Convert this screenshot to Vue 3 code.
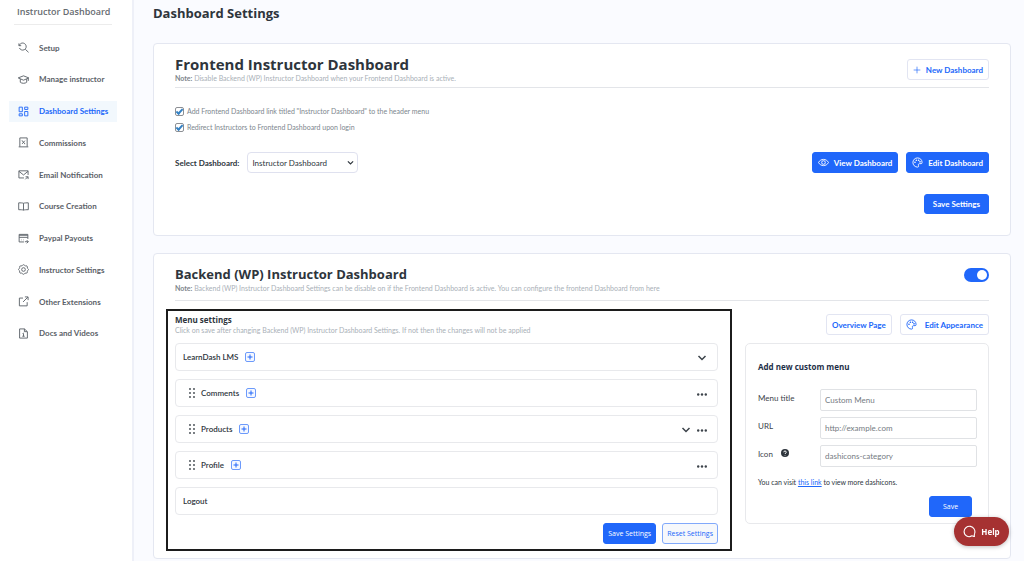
<script setup>
import { ref } from 'vue'

const navItems = [
  { label: 'Setup', icon: 'setup' },
  { label: 'Manage instructor', icon: 'cap' },
  { label: 'Dashboard Settings', icon: 'grid', active: true },
  { label: 'Commissions', icon: 'receipt' },
  { label: 'Email Notification', icon: 'mail' },
  { label: 'Course Creation', icon: 'book' },
  { label: 'Paypal Payouts', icon: 'card' },
  { label: 'Instructor Settings', icon: 'gear' },
  { label: 'Other Extensions', icon: 'external' },
  { label: 'Docs and Videos', icon: 'doc' },
]

const icons = {
  setup: 'M2 3v5h5M2.500 8C5 1.500 12 .5 16 5c3.500 4 2 10-2.500 12C9 19 4.500 16.500 3 13M16 16l7 6.500',
  cap: 'M.5 8.500L12 4l11.500 4.500L12 13.500zM5 11v7c3.500 3 10.500 3 14 0v-7M22.500 9v6',
  grid: 'M2.500 2.500h7v10h-7zM14.500 2.500h7v5h-7zM14.500 12h7v9.500h-7zM2.500 17h7v4.500h-7z',
  receipt: 'M4 21V2h16v19M1.500 21.500h21M9 8l6 7M15 8l-6 7M8.500 8h1M14.500 15h1',
  mail: 'M13 19.500H2V4h20v9M2 5l10 8L22 5M16 22.500l5.500-5.500M16.500 17H22v5',
  book: 'M12 5v15M12 5C10 4 5 4 1.500 4v15c4 0 8.500 0 10.500 1 2-1 6.500-1 10.500-1V4c-3.500 0-8.500 0-10.500 1z',
  card: 'M13 19.500H2.500V3h19v10M2.500 5h19M2.500 9.500h19M7 15h1M11 15h1M15 19h7.500M19 15.500l3.500 3.500-3.500 3.500',
  gear: 'M12 1.500c2 0 2 2 3.500 2.500s3-.8 4.300.6 0 3 .7 4.400S23 10.500 23 12s-2 1.500-2.500 3 .8 3-.6 4.300-3 0-4.400.7S14 22.500 12 22.500s-2-2-3.500-2.500-3 .8-4.300-.6 0-3-.7-4.400S1 13.500 1 12s2-1.500 2.500-3-.8-3 .6-4.300 3 0 4.400-.7S10 1.500 12 1.500zM16 12a4 4 0 1 1-8 0 4 4 0 0 1 8 0z',
  external: 'M11 4.500H3v17h17v-8M15 2h7v7M21.500 2.500L11 13',
  doc: 'M14 2H3.500v20h17V8zM14 2v6h6M10 12h2v6M9.500 18h5M12 9v.5',
}

const palette =
  'M12 2a10 10 0 0 0 0 20c3 0 2.500-2.500 2-4-.5-2 .5-3.500 2.500-3.500H20c1.500 0 2-1 2-2.500C22 6 17.500 2 12 2z'
const paletteDots = [[6.5, 11.5], [9.5, 7], [14.5, 7], [17.5, 10.5]]

const rows = [
  { label: 'LearnDash LMS', add: true, chevron: true },
  { label: 'Comments', add: true, drag: true, more: true },
  { label: 'Products', add: true, drag: true, chevron: true, more: true },
  { label: 'Profile', add: true, drag: true, more: true },
  { label: 'Logout' },
]

const addLink = ref(true)
const redirect = ref(true)
const backend = ref(true)
const title = ref('')
const url = ref('')
const icon = ref('')
</script>

<template>
  <div class="page">
    <aside class="sidebar">
      <h2 class="brand">Instructor Dashboard</h2>
      <nav class="nav">
        <a v-for="n in navItems" :key="n.label" href="#" class="nav-item" :class="{ active: n.active }">
          <svg class="icon" viewBox="0 0 24 24"><path :d="icons[n.icon]" /></svg>
          <span>{{ n.label }}</span>
        </a>
      </nav>
    </aside>

    <main class="main">
      <h1 class="page-title">Dashboard Settings</h1>

      <section class="card front">
        <header class="card-head">
          <div>
            <h2>Frontend Instructor Dashboard</h2>
            <p class="note"><b>Note:</b> Disable Backend (WP) Instructor Dashboard when your Frontend Dashboard is active.</p>
          </div>
          <button type="button" class="btn outline tight">
            <svg class="icon plus" viewBox="0 0 24 24"><path d="M12 2v20M2 12h20" /></svg>
            New Dashboard
          </button>
        </header>
        <div class="checks">
          <label><input v-model="addLink" type="checkbox" /><span>Add Frontend Dashboard link titled "Instructor Dashboard" to the header menu</span></label>
          <label><input v-model="redirect" type="checkbox" /><span>Redirect Instructors to Frontend Dashboard upon login</span></label>
        </div>
        <div class="select-row">
          <label for="dash" class="select-label">Select Dashboard:</label>
          <span class="select-wrap">
            <select id="dash"><option>Instructor Dashboard</option></select>
            <svg class="icon caret" viewBox="0 0 24 24"><path d="M3 8l9 9 9-9" /></svg>
          </span>
          <span class="spacer"></span>
          <button type="button" class="btn solid tight">
            <svg class="icon" viewBox="0 0 24 24"><path d="M1 12C6 3 18 3 23 12 18 21 6 21 1 12zM16 12a4 4 0 1 1-8 0 4 4 0 0 1 8 0z" /></svg>
            View Dashboard
          </button>
          <button type="button" class="btn solid tight">
            <svg class="icon" viewBox="0 0 24 24">
              <path :d="palette" />
              <circle v-for="(d, i) in paletteDots" :key="i" class="dot" :cx="d[0]" :cy="d[1]" r="1.800" />
            </svg>
            Edit Dashboard
          </button>
        </div>
        <div class="save-row"><button type="button" class="btn solid low">Save Settings</button></div>
      </section>

      <section class="card back">
        <header class="card-head">
          <div>
            <h2>Backend (WP) Instructor Dashboard</h2>
            <p class="note"><b>Note:</b> Backend (WP) Instructor Dashboard Settings can be disable on if the Frontend Dashboard is active. You can configure the frontend Dashboard from here</p>
          </div>
          <input v-model="backend" type="checkbox" role="switch" class="toggle" aria-label="Backend Instructor Dashboard" />
        </header>

        <div class="columns">
          <section class="menu-panel">
            <h3>Menu settings</h3>
            <p class="note">Click on save after changing Backend (WP) Instructor Dashboard Settings. If not then the changes will not be applied</p>
            <ul class="rows">
              <li v-for="r in rows" :key="r.label" class="row" :class="{ nested: r.drag }">
                <svg v-if="r.drag" class="drag" viewBox="0 0 6 10">
                  <template v-for="y in [1, 5, 9]" :key="y">
                    <circle cx="1" :cy="y" r="0.900" /><circle cx="5" :cy="y" r="0.900" />
                  </template>
                </svg>
                <span class="row-label">{{ r.label }}</span>
                <button v-if="r.add" type="button" class="add" :aria-label="'Add to ' + r.label">
                  <svg viewBox="0 0 8 8"><path d="M4 1.500v5M1.500 4h5" /></svg>
                </button>
                <span class="spacer"></span>
                <button v-if="r.chevron" type="button" class="bare" aria-label="Expand">
                  <svg class="chev" viewBox="0 0 10 10"><path d="M1.500 4L5 7.500 8.500 4" /></svg>
                </button>
                <button v-if="r.more" type="button" class="bare" aria-label="More">
                  <svg class="more" viewBox="0 0 10 10"><circle cx="1.200" cy="6.500" r="1.200" /><circle cx="5" cy="6.500" r="1.200" /><circle cx="8.800" cy="6.500" r="1.200" /></svg>
                </button>
              </li>
            </ul>
            <div class="panel-actions">
              <button type="button" class="btn solid small">Save Settings</button>
              <button type="button" class="btn reset small">Reset Settings</button>
            </div>
          </section>

          <div class="side">
            <div class="side-actions">
              <button type="button" class="btn outline">Overview Page</button>
              <button type="button" class="btn outline">
                <svg class="icon" viewBox="0 0 24 24">
                  <path :d="palette" />
                  <circle v-for="(d, i) in paletteDots" :key="i" class="dot" :cx="d[0]" :cy="d[1]" r="1.800" />
                </svg>
                Edit Appearance
              </button>
            </div>
            <form class="custom" @submit.prevent>
              <h3>Add new custom menu</h3>
              <div class="field"><label for="m-title">Menu title</label><input id="m-title" v-model="title" type="text" placeholder="Custom Menu" /></div>
              <div class="field"><label for="m-url">URL</label><input id="m-url" v-model="url" type="text" placeholder="http://example.com" /></div>
              <div class="field">
                <label for="m-icon">Icon
                  <svg class="q" viewBox="0 0 16 16"><circle cx="8" cy="8" r="8" /><path d="M5.500 6.500c0-3.500 5-3.500 5 0 0 1.500-2.500 1.800-2.500 3.500M8 12v1" /></svg>
                </label>
                <input id="m-icon" v-model="icon" type="text" placeholder="dashicons-category" />
              </div>
              <p class="visit">You can visit <a href="#">this link</a> to view more dashicons.</p>
              <div class="custom-actions"><button type="submit" class="btn solid small save">Save</button></div>
            </form>
          </div>
        </div>
      </section>
    </main>

    <button type="button" class="help">
      <svg viewBox="0 0 24 24"><path d="M20 21l-3.500-1C10 24 2 19.500 2 12a10 10 0 1 1 19.500 3.500c-.8 2-.8 3-.5 5.500z" /></svg>
      Help
    </button>
  </div>
</template>

<style>
body { background: #fafbff; }
</style>

<style scoped>
.page {
  display: flex;
  min-height: 100vh;
  background: #fafbff;
  color: #2e353c;
  font-family: Lato, "Open Sans", sans-serif;
  font-size: 8px;
  line-height: 10px;
}
.page *, .page *::before { box-sizing: border-box; }
h1, h2, h3, p, ul { margin: 0; padding: 0; }
button, input, select { font: inherit; margin: 0; }
h1, h2, h3, .btn.small, .help { font-family: "Open Sans", "Noto Sans", sans-serif; }
button { cursor: pointer; }
.icon { width: 11px; height: 11px; flex: none; fill: none; stroke: currentColor; stroke-width: 2; }
.dot { fill: currentColor; stroke: none; }
.spacer { flex: 1; }

.sidebar {
  flex: none;
  width: 134px;
  background: #fff;
  border-right: 2px solid #eef0f8;
}
.brand {
  margin: 0 20px 0 14px;
  padding: 5px 0 6px 3px;
  border-bottom: 1px solid #ececec;
  color: #666b70;
  font-size: 9px;
  font-weight: 600;
  line-height: 13px;
  white-space: nowrap;
}
.nav {
  display: flex;
  flex-direction: column;
  justify-content: space-between;
  min-height: 319px;
  padding: 12px 15px 0 9px;
}
.nav-item {
  display: flex;
  align-items: center;
  gap: 10px;
  height: 21px;
  padding-left: 9px;
  color: #5b6168;
  font-weight: 700;
  text-decoration: none;
  white-space: nowrap;
}
.nav-item.active { background: #f2f8fd; color: #2067fa; }

.main { flex: 1; min-width: 0; padding: 3px 13px 0 19px; }
.page-title { font-size: 13px; line-height: 20px; }
.card {
  border: 1px solid #e4e7f1;
  border-radius: 4px;
  background: #fff;
}
.front { margin-top: 20px; padding: 12px 21px 21px; }
.back { margin-top: 17px; padding: 12px 12px 7px; }
.card-head { display: flex; justify-content: space-between; align-items: center; border-bottom: 1px solid #e3e5e9; }
.front .card-head { padding-bottom: 4px; }
.back .card-head { align-items: flex-start; margin: 0 9px; padding-bottom: 7px; }
.front h2 { font-size: 15px; line-height: 17px; }
.back h2 { font-size: 13px; line-height: 17px; }
.note { color: #a9b0b7; font-size: 7px; line-height: 10px; }
.note b { color: #7d848b; }

.btn {
  display: inline-flex;
  align-items: center;
  justify-content: center;
  gap: 8px;
  height: 21px;
  padding: 0 5px;
  border: 1px solid #2067fa;
  border-radius: 3px;
  font-weight: 700;
  line-height: 10px;
  white-space: nowrap;
}
.tight { gap: 5px; }
.solid { background: #2067fa; color: #fff; }
.outline { background: #fff; border-color: #e2e5f2; color: #2067fa; }
.reset { background: #f6f8fb; border-color: #81a9fb; color: #2067fa; }
.small { padding: 0 4px; font-size: 7px; font-weight: 500; }
.plus { width: 8px; height: 8px; }

.checks { display: flex; flex-direction: column; gap: 6px; margin-top: 18px; }
.checks label { display: flex; align-items: center; gap: 3px; color: #7d868e; font-size: 7px; }
.checks input {
  display: grid;
  place-items: center;
  appearance: none;
  width: 9px;
  height: 9px;
  border: 1px solid #8c8f94;
  border-radius: 2px;
  background: #fff;
}
.checks input:checked::before {
  content: "";
  width: 7px;
  height: 4px;
  border: solid #3582c4;
  border-width: 0 0 2px 2px;
  transform: rotate(-48deg);
}
.select-row { display: flex; align-items: center; gap: 8px; margin-top: 20px; }
.select-label { font-weight: 700; }
.select-wrap { position: relative; width: 111px; }
.select-wrap select {
  appearance: none;
  width: 100%;
  height: 21px;
  padding: 0 4px;
  border: 1px solid #dfe1ef;
  border-radius: 4px;
  background: #fff;
  color: #2e353c;
}
.caret { position: absolute; right: 4px; top: 7px; width: 7px; height: 7px; stroke-width: 4; pointer-events: none; }
.save-row { display: flex; justify-content: flex-end; margin-top: 21px; }
.low { height: 20px; padding: 0 8px; }

.toggle {
  appearance: none;
  display: flex;
  align-items: center;
  justify-content: flex-start;
  width: 25px;
  height: 14px;
  margin-top: 2px;
  padding: 0 2px;
  border-radius: 7px;
  background: #b9c0cb;
}
.toggle:checked { background: #2067fa; justify-content: flex-end; }
.toggle::before { content: ""; width: 10px; height: 10px; border-radius: 50%; background: #fff; }

.columns { display: grid; grid-template-columns: minmax(0, 1fr) 244px; gap: 13px; margin: 8px 9px 0 0; }
.menu-panel { padding: 4px 12px 5px 7px; border: 2px solid #1c1c1c; }
.menu-panel h3 { font-size: 8px; line-height: 10px; }
.rows { display: flex; flex-direction: column; gap: 8px; margin-top: 8px; list-style: none; }
.row {
  display: flex;
  align-items: center;
  height: 28px;
  padding: 0 10px 0 7px;
  border: 1px solid #e8e9ec;
  border-radius: 4px;
  font-weight: 600;
}
.nested { padding-left: 13px; }
.drag { width: 6px; height: 10px; margin-right: 6px; fill: #3c434a; }
.add { display: grid; place-items: center; width: 10px; height: 10px; margin-left: 7px; padding: 0; border: 1px solid #6c9afb; border-radius: 2px; background: #f5f8ff; color: #2067fa; }
.add svg { width: 8px; height: 8px; fill: none; stroke: currentColor; stroke-width: 1; }
.bare { display: grid; margin-left: 6px; padding: 0; border: 0; background: none; color: #3c434a; }
.bare svg { width: 10px; height: 10px; }
.chev { fill: none; stroke: currentColor; stroke-width: 1.5; }
.more { fill: currentColor; }
.panel-actions { display: flex; justify-content: flex-end; gap: 6px; margin-top: 8px; }

.side { padding-top: 5px; }
.side-actions { display: flex; justify-content: flex-end; gap: 8px; }
.custom { margin-top: 8px; padding: 18px 11px 6px 12px; border: 1px solid #e8e9ec; border-radius: 5px; }
.custom h3 { margin-bottom: 17px; color: #1d2f47; font-size: 8px; line-height: 10px; }
.field { display: grid; grid-template-columns: 62px minmax(0, 1fr); margin-bottom: 6px; }
.field label { display: flex; gap: 8px; padding-top: 4px; color: #3c434a; }
.field input {
  width: 100%;
  height: 22px;
  padding: 0 4px;
  border: 1px solid #e0e2e5;
  border-radius: 2px;
  background: #fff;
  color: #2e353c;
}
.field input::placeholder { color: #757b82; }
.q { width: 8px; height: 8px; fill: #2e353c; }
.q path { fill: none; stroke: #fff; stroke-width: 2; }
.visit { margin-top: 10px; font-size: 7px; }
.visit a { color: #2067fa; }
.custom-actions { display: flex; justify-content: flex-end; margin-top: 9px; padding-right: 5px; }
.save { width: 43px; }

.help {
  position: fixed;
  right: 15px;
  bottom: 15px;
  display: flex;
  align-items: center;
  justify-content: center;
  gap: 5px;
  width: 55px;
  height: 29px;
  padding: 0;
  border: 0;
  border-radius: 15px;
  background: #a63232;
  box-shadow: 0 1px 4px rgba(0, 0, 0, 0.25);
  color: #fff;
  font-size: 8px;
  font-weight: 700;
}
.help svg { width: 13px; height: 13px; fill: none; stroke: currentColor; stroke-width: 2; }
</style>
